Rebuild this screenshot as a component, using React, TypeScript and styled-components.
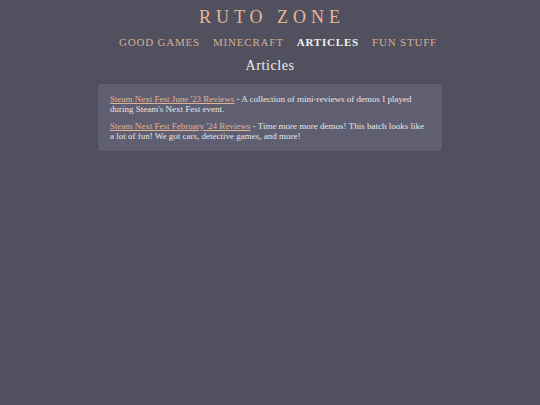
import React from "react";
import styled, { createGlobalStyle } from "styled-components";

const Global = createGlobalStyle`
  html, body { margin: 0; padding: 0; }
  body {
    background: #50505f;
    font-family: "Liberation Serif", "DejaVu Serif", serif;
    color: #e9e6e6;
    min-height: 405px;
  }
`;

const Page = styled.div`
  display: flex;
  flex-direction: column;
  align-items: center;
  padding-top: 7px;
`;

const Title = styled.h1`
  margin: 0;
  font-size: 18px;
  font-weight: normal;
  letter-spacing: 5px;
  color: #e5b898;
  line-height: 20px;
  padding-left: 4px;
`;

const Nav = styled.nav`
  display: flex;
  gap: 13px;
  margin-top: 9px;
  padding-left: 16px;
`;

const NavLink = styled.a<{ $active?: boolean }>`
  font-size: 11px;
  letter-spacing: 0.8px;
  text-transform: uppercase;
  text-decoration: none;
  line-height: 13px;
  color: ${(p) => (p.$active ? "#f2f0f0" : "#d9ad92")};
  font-weight: ${(p) => (p.$active ? "bold" : "normal")};
`;

const Heading = styled.h2`
  margin: 9px 0 0;
  font-size: 14px;
  font-weight: normal;
  letter-spacing: 0.6px;
  line-height: 16px;
  color: #f0eeee;
`;

const Card = styled.section`
  box-sizing: border-box;
  width: 344px;
  margin-top: 10px;
  background: #5f5f71;
  border-radius: 3px;
  padding: 10px 12px 10px;
  box-shadow: 0 0 2px rgba(0, 0, 0, 0.15);
`;

const Entry = styled.p`
  margin: 0;
  font-size: 9px;
  line-height: 10px;
  & + & {
    margin-top: 7px;
  }
`;

const Link = styled.a`
  color: #e2b295;
  text-decoration: underline;
`;

export default function App() {
  return (
    <>
      <Global />
      <Page>
        <Title>RUTO ZONE</Title>
        <Nav>
          <NavLink href="#">Good Games</NavLink>
          <NavLink href="#">Minecraft</NavLink>
          <NavLink href="#" $active>
            Articles
          </NavLink>
          <NavLink href="#">Fun Stuff</NavLink>
        </Nav>
        <Heading>Articles</Heading>
        <Card>
          <Entry>
            <Link href="#">Steam Next Fest June '23 Reviews</Link> - A collection of
            mini-reviews of demos I played during Steam's Next Fest event.
          </Entry>
          <Entry>
            <Link href="#">Steam Next Fest February '24 Reviews</Link> - Time more more
            demos! This batch looks like a lot of fun! We got cars, detective games, and
            more!
          </Entry>
        </Card>
      </Page>
    </>
  );
}
